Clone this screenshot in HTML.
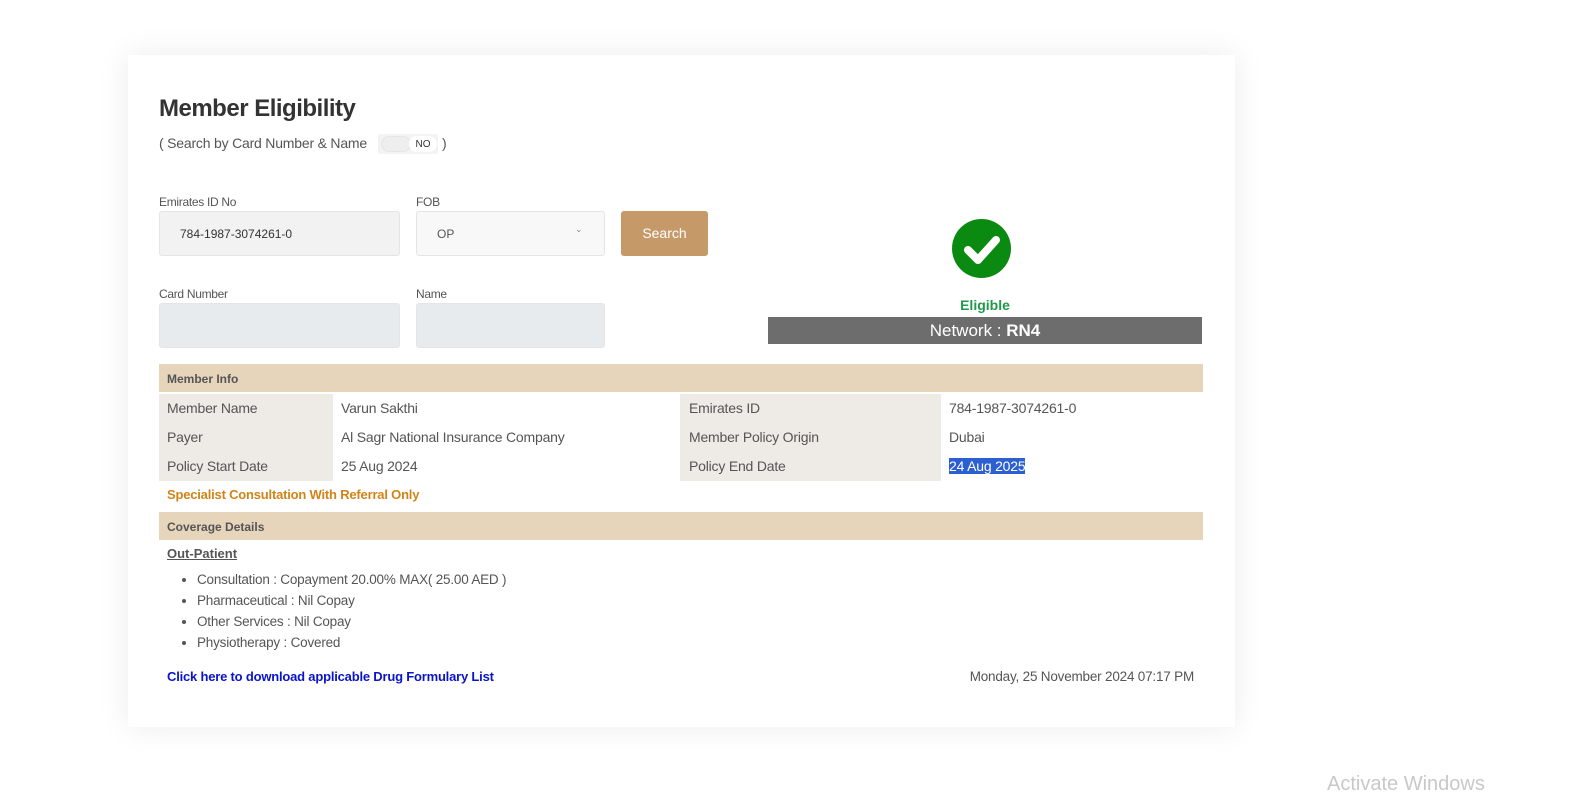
<!DOCTYPE html>
<html><head><meta charset="utf-8"><style>
*{box-sizing:border-box;margin:0;padding:0}
body{width:1572px;height:790px;background:#fff;font-family:"Liberation Sans",sans-serif;position:relative;overflow:hidden;color:#555}
.a{position:absolute;white-space:nowrap}
.card{left:128px;top:55px;width:1107px;height:672px;background:#fff;box-shadow:0 0 30px rgba(0,0,0,0.08)}
.lbl{font-size:12px;color:#555;letter-spacing:-0.3px}
.inp{border-radius:3px;border:1px solid #e3e5e8}
.t{font-size:14px;color:#555;letter-spacing:-0.2px}
</style></head><body>
<div class="a card"></div>
<div class="a" style="left:159px;top:95px;font-size:24px;font-weight:bold;color:#333;letter-spacing:-0.5px">Member Eligibility</div>
<div class="a t" style="left:159px;top:135px">( Search by Card Number &amp; Name</div>
<div class="a" style="left:378px;top:134px;width:60px;height:20px;background:#f3f3f3;border-radius:3px"></div>
<div class="a" style="left:381px;top:136px;width:30px;height:16px;background:#eee;border-radius:8px;border:1px solid #e6e6e6"></div>
<div class="a" style="left:409px;top:136px;width:28px;height:16px;background:#fff;border-radius:8px;font-size:10px;color:#333;text-align:center;line-height:17px">NO</div>
<div class="a t" style="left:442px;top:135px">)</div>

<div class="a lbl" style="left:159px;top:195px">Emirates ID No</div>
<div class="a inp" style="left:159px;top:211px;width:241px;height:45px;background:#f2f2f2;font-size:12px;color:#333;padding:15px 0 0 20px">784-1987-3074261-0</div>
<div class="a lbl" style="left:416px;top:195px">FOB</div>
<div class="a inp" style="left:416px;top:211px;width:189px;height:45px;background:#f8f8f8;font-size:12px;color:#555;padding:15px 0 0 20px">OP<span style="position:absolute;left:158px;top:12px;font-size:9px;color:#888">⌄</span></div>
<div class="a" style="left:621px;top:211px;width:87px;height:45px;background:#c59a68;border-radius:3px;color:#fff;font-size:14px;text-align:center;line-height:44px">Search</div>
<div class="a lbl" style="left:159px;top:287px">Card Number</div>
<div class="a inp" style="left:159px;top:303px;width:241px;height:45px;background:#e8ebee"></div>
<div class="a lbl" style="left:416px;top:287px">Name</div>
<div class="a inp" style="left:416px;top:303px;width:189px;height:45px;background:#e8ebee"></div>

<svg class="a" style="left:952px;top:219px" width="59" height="59" viewBox="0 0 59 59"><circle cx="29.5" cy="29.5" r="29.5" fill="#0a8a10"/><path d="M16 31 L26 41 L44 21" stroke="#fff" stroke-width="8" fill="none" stroke-linecap="round" stroke-linejoin="round"/></svg>
<div class="a" style="left:768px;top:297px;width:434px;text-align:center;color:#1e9a4a;font-weight:bold;font-size:14px">Eligible</div>
<div class="a" style="left:768px;top:317px;width:434px;height:27px;background:#6d6d6d;color:#fff;text-align:center;font-size:17px;line-height:27px">Network : <b>RN4</b></div>

<div class="a" style="left:159px;top:364px;width:1044px;height:28px;background:#e6d4bb;font-size:12px;font-weight:bold;color:#555;padding:8px 0 0 8px">Member Info</div>
<div class="a" style="left:159px;top:394px;width:174px;height:87px;background:#eeebe6"></div>
<div class="a" style="left:680px;top:394px;width:261px;height:87px;background:#eeebe6"></div>
<div class="a t" style="left:167px;top:394px;line-height:29px">Member Name<br>Payer<br>Policy Start Date</div>
<div class="a t" style="left:341px;top:394px;line-height:29px">Varun Sakthi<br>Al Sagr National Insurance Company<br>25 Aug 2024</div>
<div class="a t" style="left:689px;top:394px;line-height:29px">Emirates ID<br>Member Policy Origin<br>Policy End Date</div>
<div class="a t" style="left:949px;top:394px;line-height:29px">784-1987-3074261-0<br>Dubai<br><span style="background:#2c5fd0;color:#fff">24 Aug 2025</span></div>
<div class="a" style="left:167px;top:487px;font-size:13px;font-weight:bold;color:#d08418;letter-spacing:-0.2px">Specialist Consultation With Referral Only</div>
<div class="a" style="left:159px;top:512px;width:1044px;height:28px;background:#e6d4bb;font-size:12px;font-weight:bold;color:#555;padding:8px 0 0 8px">Coverage Details</div>
<div class="a" style="left:167px;top:546px;font-size:13px;font-weight:bold;color:#555;text-decoration:underline">Out-Patient</div>
<ul class="a t" style="left:197px;top:569px;line-height:21px;list-style:disc;font-size:13.5px">
<li>Consultation : Copayment 20.00% MAX( 25.00 AED )</li>
<li>Pharmaceutical : Nil Copay</li>
<li>Other Services : Nil Copay</li>
<li>Physiotherapy : Covered</li>
</ul>
<div class="a" style="left:167px;top:669px;font-size:13px;font-weight:bold;color:#0a14c8;letter-spacing:-0.2px">Click here to download applicable Drug Formulary List</div>
<div class="a t" style="left:900px;top:669px;width:294px;text-align:right;font-size:13.5px">Monday, 25 November 2024 07:17 PM</div>
<div class="a" style="left:1327px;top:773px;font-size:20px;color:#c8c8c8">Activate Windows</div>
</body></html>
